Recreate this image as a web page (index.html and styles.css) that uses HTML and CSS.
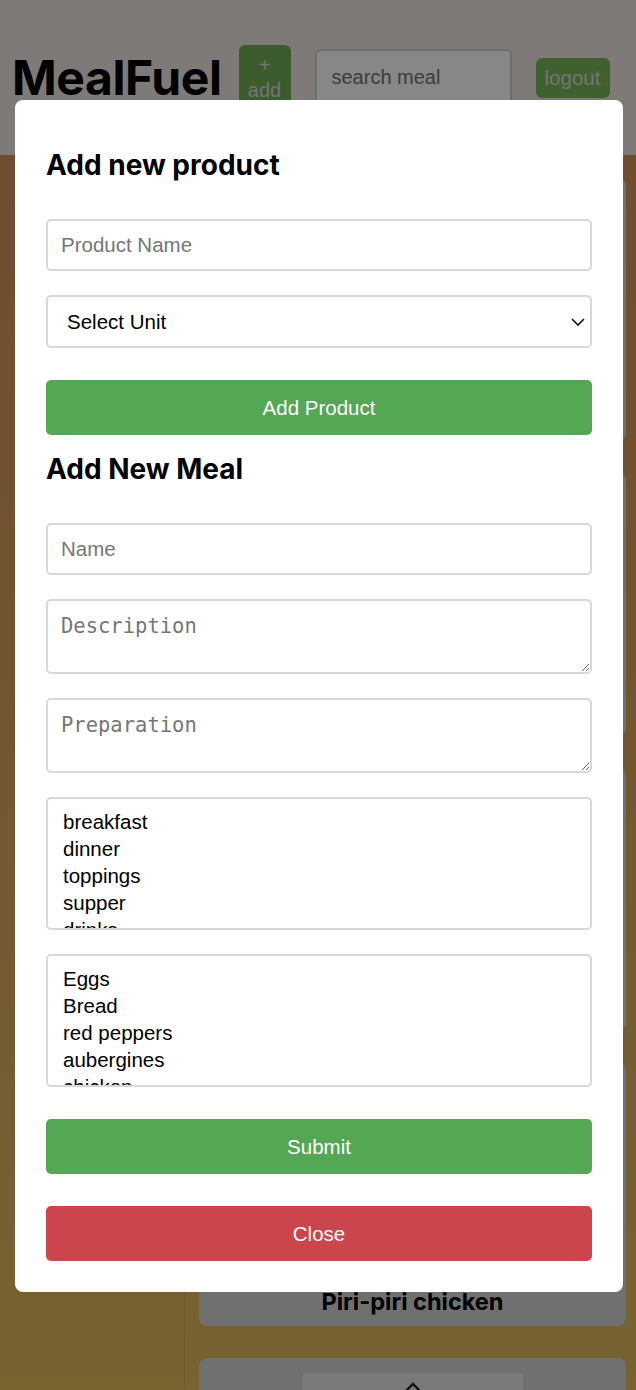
FILE: index.html
```html
<!DOCTYPE html>
<html lang="en">
<head>
<meta charset="utf-8">
<title>MealFuel</title>
<link rel="stylesheet" href="styles.css">
</head>
<body>
<header class="topbar">
  <h1 class="logo">MealFuel</h1>
  <button class="btn-add">+<br>add</button>
  <input class="search" type="text" placeholder="search meal">
  <button class="btn-logout">logout</button>
</header>
<main class="layout">
  <aside class="sidebar"></aside>
  <section class="cards">
    <article class="card"><div class="card-img"></div><h3 class="card-title">Scrambled eggs</h3></article>
    <article class="card"><div class="card-img"></div><h3 class="card-title">Toast</h3></article>
    <article class="card"><div class="card-img"></div><h3 class="card-title">Stuffed peppers</h3></article>
    <article class="card"><div class="card-img"></div><h3 class="card-title">Piri-piri chicken</h3></article>
    <article class="card"><div class="card-img"><svg class="img-icon" width="18" height="10" viewBox="0 0 18 10"><polyline points="2,9 9,2 16,9" fill="none" stroke="#222" stroke-width="2.4"/></svg></div><h3 class="card-title">Aubergine</h3></article>
  </section>
</main>
<div class="overlay">
  <div class="modal">
    <h2 class="modal-title">Add new product</h2>
    <input class="field field-first" type="text" placeholder="Product Name">
    <div class="select-wrap">
      <select class="field field-select">
        <option>Select Unit</option>
        <option>g</option>
        <option>ml</option>
        <option>pcs</option>
      </select>
      <svg class="select-arrow" width="14" height="8" viewBox="0 0 14 8"><polyline points="1,1 7,7 13,1" fill="none" stroke="#111" stroke-width="1.6"/></svg>
    </div>
    <button class="btn btn-green btn-product">Add Product</button>
    <h2 class="modal-title">Add New Meal</h2>
    <input class="field field-first" type="text" placeholder="Name">
    <textarea class="field field-area" placeholder="Description"></textarea>
    <textarea class="field field-area" placeholder="Preparation"></textarea>
    <select class="field field-list" multiple>
      <option>breakfast</option>
      <option>dinner</option>
      <option>toppings</option>
      <option>supper</option>
      <option>drinks</option>
      <option>snacks</option>
    </select>
    <select class="field field-list" multiple>
      <option>Eggs</option>
      <option>Bread</option>
      <option>red peppers</option>
      <option>aubergines</option>
      <option>chicken</option>
      <option>rice</option>
    </select>
    <button class="btn btn-green btn-submit">Submit</button>
    <button class="btn btn-red btn-close">Close</button>
  </div>
</div>
</body>
</html>
```
FILE: styles.css
```css
* { box-sizing: border-box; }

html, body {
  margin: 0;
  padding: 0;
  width: 636px;
  height: 1390px;
  overflow: hidden;
}

body {
  font-family: "Liberation Sans", Arial, sans-serif;
  background: #eee6e2;
}

.topbar {
  height: 155px;
  display: flex;
  align-items: center;
  padding: 0 12px;
  background: #eee6e2;
}

.logo {
  margin: 0 17px 0 0;
  font-family: Inter, "Liberation Sans", sans-serif;
  font-size: 48px;
  font-weight: 700;
  letter-spacing: -0.4px;
  color: #000;
  line-height: 1;
}

.btn-add {
  width: 52px;
  height: 66px;
  border: none;
  border-radius: 6px;
  background: #72ae56;
  color: #dcdcdc;
  font-family: "Liberation Sans", Arial, sans-serif;
  font-size: 20px;
  line-height: 25px;
  padding: 8px 0;
  margin-right: 24px;
}

.search {
  width: 197px;
  height: 58px;
  border: 2px solid #cfcfcf;
  border-radius: 6px;
  background: #fff;
  padding: 0 15px;
  font-family: "Liberation Sans", Arial, sans-serif;
  font-size: 20px;
  margin-right: 24px;
}
.search::placeholder { color: #727272; }

.btn-logout {
  width: 74px;
  height: 40px;
  border: none;
  border-radius: 6px;
  background: #75b858;
  color: #dcdcdc;
  font-family: "Liberation Sans", Arial, sans-serif;
  font-size: 20.5px;
  padding: 0;
}

.layout {
  display: flex;
  height: 1235px;
  background: linear-gradient(180deg, #d3915a 0%, #d9a45c 50%, #e0bd5e 100%);
  overflow: hidden;
}

.sidebar {
  width: 185px;
  flex: none;
  border-right: 1px solid rgba(0, 0, 0, 0.08);
}

.cards {
  margin-left: 14px;
  width: 427px;
  padding-top: 23px;
  display: flex;
  flex-direction: column;
  gap: 32px;
}

.card {
  flex: none;
  height: 263px;
  background: #d3d3d3;
  border-radius: 8px;
  padding: 15px 0 0;
  display: flex;
  flex-direction: column;
  align-items: center;
}

.card-img {
  width: 220px;
  height: 195px;
  background: #e6e6e6;
  display: flex;
  justify-content: center;
  padding-top: 9px;
}
.img-icon { display: block; }

.card-title {
  margin: 15px 0 0;
  font-family: Inter, "Liberation Sans", sans-serif;
  font-size: 23.5px;
  line-height: 28px;
  font-weight: 700;
  color: #000;
}

.overlay {
  position: fixed;
  inset: 0;
  background: rgba(0, 0, 0, 0.47);
  padding: 100px 0 0 15px;
}

.modal {
  width: 608px;
  background: #fff;
  border-radius: 8px;
  padding: 31px 31px 31px;
  display: flex;
  flex-direction: column;
}

.modal-title {
  margin: 17px 0 37px;
  font-family: Inter, "Liberation Sans", sans-serif;
  font-size: 28px;
  line-height: 34px;
  font-weight: 700;
  color: #000;
}

.field {
  width: 100%;
  border: 2px solid #d8d8d8;
  border-radius: 5px;
  background: #fff;
  font-family: "Liberation Sans", Arial, sans-serif;
  font-size: 20.5px;
  color: #000;
  margin: 0;
}

input.field {
  height: 52px;
  padding: 0 13px;
}
.field::placeholder { color: #767676; }

.select-wrap {
  position: relative;
  margin-top: 24px;
}

.field-select {
  display: block;
  height: 53px;
  padding: 0 40px 0 19px;
  appearance: none;
  -webkit-appearance: none;
}

.select-arrow {
  position: absolute;
  right: 7px;
  top: 23px;
  pointer-events: none;
}

.field-area {
  height: 75px;
  margin-top: 24px;
  padding: 13px 13px;
  font-family: "DejaVu Sans Mono", "Liberation Mono", monospace;
  font-size: 20.5px;
  resize: vertical;
}

.field-list {
  height: 133px;
  margin-top: 24px;
  padding: 10px 13px;
  overflow: hidden;
}
.field-list option {
  padding: 1px 2px 2px;
  line-height: 23.6px;
}

.btn {
  width: 100%;
  height: 55px;
  border: none;
  border-radius: 5px;
  color: #fff;
  font-family: "Liberation Sans", Arial, sans-serif;
  font-size: 20.5px;
  padding: 0;
}
.btn-green { background: #54a754; }
.btn-red { background: #cb454c; }

.btn-product { margin-top: 32px; }
.btn-submit { margin-top: 32px; }
.btn-close { margin-top: 32px; }
```
